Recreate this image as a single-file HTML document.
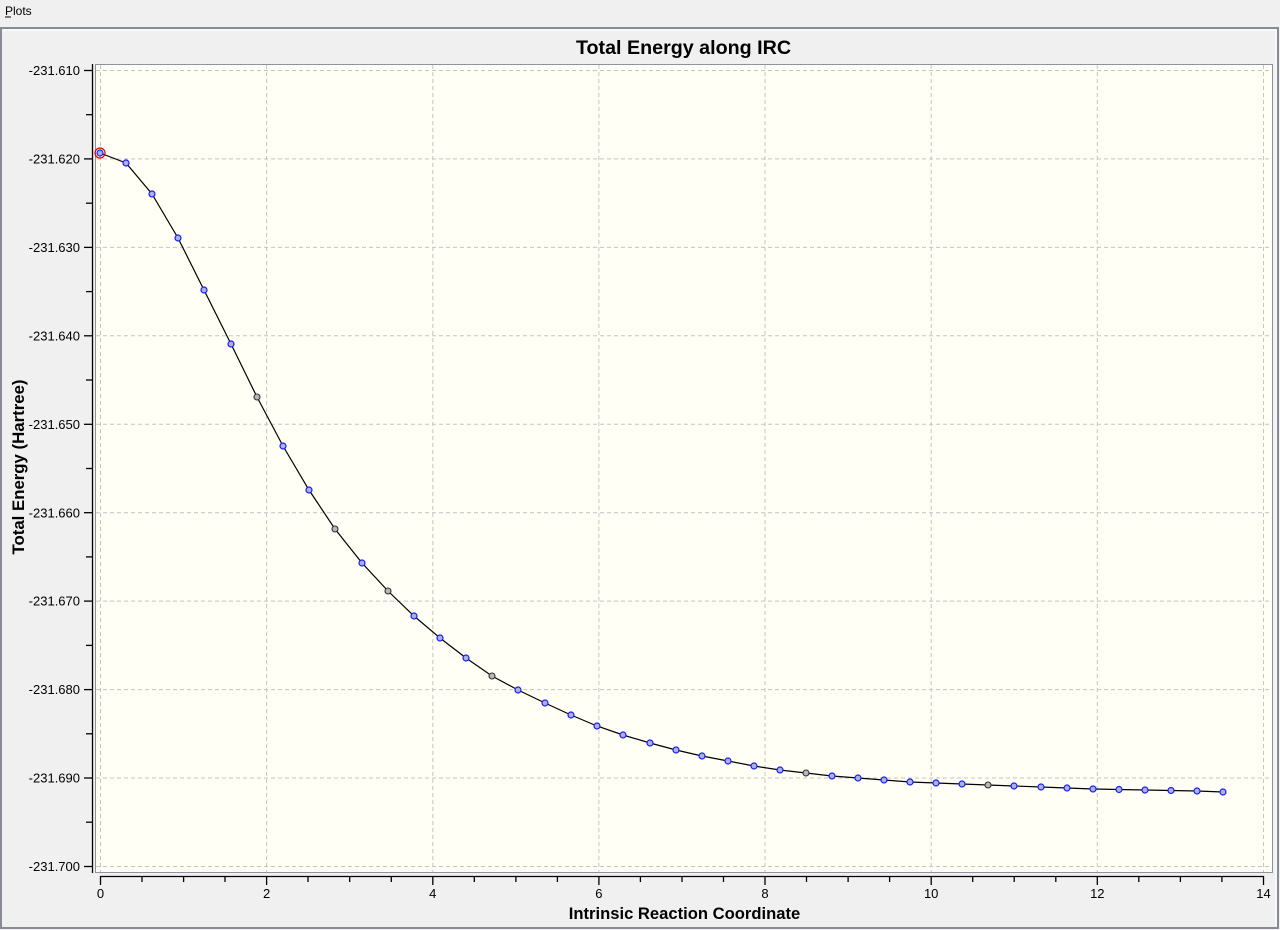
<!DOCTYPE html>
<html><head><meta charset="utf-8"><style>
html,body{margin:0;padding:0;width:1280px;height:930px;overflow:hidden;background:#f0f0f0;font-family:"Liberation Sans",Arial,sans-serif;}
</style></head><body>
<svg width="1280" height="930" viewBox="0 0 1280 930" xmlns="http://www.w3.org/2000/svg" font-family="Liberation Sans, Arial, sans-serif">
<rect x="0" y="0" width="1280" height="930" fill="#f0f0f0"/>
<text x="5" y="15" font-size="12" fill="#000">Plots</text>
<line x1="5" y1="17" x2="11" y2="17" stroke="#000" stroke-width="1"/>
<rect x="1" y="28" width="1277" height="900" fill="#f0f0f0" stroke="#878b96" stroke-width="2"/>
<line x1="3" y1="30" x2="1276" y2="30" stroke="#fff"/>
<line x1="1276" y1="30" x2="1276" y2="926" stroke="#fff"/>
<text x="683.5" y="54" font-size="19.7" font-weight="bold" text-anchor="middle" fill="#000">Total Energy along IRC</text>
<rect x="95.5" y="64.5" width="1177" height="808" fill="#fffff6" stroke="#8f939c" stroke-width="1"/>
<g stroke="#c4c4c4" stroke-width="1" stroke-dasharray="4,3" fill="none">
<line x1="96" y1="70.5" x2="1272" y2="70.5"/>
<line x1="96" y1="158.9" x2="1272" y2="158.9"/>
<line x1="96" y1="247.4" x2="1272" y2="247.4"/>
<line x1="96" y1="335.8" x2="1272" y2="335.8"/>
<line x1="96" y1="424.3" x2="1272" y2="424.3"/>
<line x1="96" y1="512.7" x2="1272" y2="512.7"/>
<line x1="96" y1="601.1" x2="1272" y2="601.1"/>
<line x1="96" y1="689.6" x2="1272" y2="689.6"/>
<line x1="96" y1="778" x2="1272" y2="778"/>
<line x1="96" y1="866.5" x2="1272" y2="866.5"/>
<line x1="100.5" y1="65" x2="100.5" y2="872"/>
<line x1="266.6" y1="65" x2="266.6" y2="872"/>
<line x1="432.8" y1="65" x2="432.8" y2="872"/>
<line x1="598.9" y1="65" x2="598.9" y2="872"/>
<line x1="765" y1="65" x2="765" y2="872"/>
<line x1="931.2" y1="65" x2="931.2" y2="872"/>
<line x1="1097.3" y1="65" x2="1097.3" y2="872"/>
<line x1="1263.5" y1="65" x2="1263.5" y2="872"/>
</g>
<g stroke="#000" stroke-width="1.3">
<line x1="92.5" y1="64" x2="92.5" y2="873"/>
<line x1="84" y1="70.5" x2="92" y2="70.5"/><line x1="86" y1="114.7" x2="92" y2="114.7"/>
<line x1="84" y1="158.9" x2="92" y2="158.9"/><line x1="86" y1="203.2" x2="92" y2="203.2"/>
<line x1="84" y1="247.4" x2="92" y2="247.4"/><line x1="86" y1="291.6" x2="92" y2="291.6"/>
<line x1="84" y1="335.8" x2="92" y2="335.8"/><line x1="86" y1="380" x2="92" y2="380"/>
<line x1="84" y1="424.3" x2="92" y2="424.3"/><line x1="86" y1="468.5" x2="92" y2="468.5"/>
<line x1="84" y1="512.7" x2="92" y2="512.7"/><line x1="86" y1="556.9" x2="92" y2="556.9"/>
<line x1="84" y1="601.1" x2="92" y2="601.1"/><line x1="86" y1="645.4" x2="92" y2="645.4"/>
<line x1="84" y1="689.6" x2="92" y2="689.6"/><line x1="86" y1="733.8" x2="92" y2="733.8"/>
<line x1="84" y1="778" x2="92" y2="778"/><line x1="86" y1="822.2" x2="92" y2="822.2"/>
<line x1="84" y1="866.5" x2="92" y2="866.5"/>
</g>
<g font-size="13" text-anchor="end" fill="#000">
<text x="80" y="75">-231.610</text>
<text x="80" y="163.5">-231.620</text>
<text x="80" y="252">-231.630</text>
<text x="80" y="340.5">-231.640</text>
<text x="80" y="429">-231.650</text>
<text x="80" y="517.5">-231.660</text>
<text x="80" y="605.5">-231.670</text>
<text x="80" y="694">-231.680</text>
<text x="80" y="782.5">-231.690</text>
<text x="80" y="871">-231.700</text>
</g>
<text transform="translate(24,467) rotate(-90)" font-size="16.8" font-weight="bold" text-anchor="middle" fill="#000">Total Energy (Hartree)</text>
<g stroke="#000" stroke-width="1.3">
<line x1="100" y1="876.5" x2="1264" y2="876.5"/>
<line x1="100.5" y1="876" x2="100.5" y2="885"/><line x1="142" y1="876" x2="142" y2="882"/><line x1="183.6" y1="876" x2="183.6" y2="882"/><line x1="225" y1="876" x2="225" y2="882"/>
<line x1="266.6" y1="876" x2="266.6" y2="885"/><line x1="308" y1="876" x2="308" y2="882"/><line x1="349.7" y1="876" x2="349.7" y2="882"/><line x1="391.3" y1="876" x2="391.3" y2="882"/>
<line x1="432.8" y1="876" x2="432.8" y2="885"/><line x1="474.3" y1="876" x2="474.3" y2="882"/><line x1="515.9" y1="876" x2="515.9" y2="882"/><line x1="557.4" y1="876" x2="557.4" y2="882"/>
<line x1="598.9" y1="876" x2="598.9" y2="885"/><line x1="640.4" y1="876" x2="640.4" y2="882"/><line x1="682" y1="876" x2="682" y2="882"/><line x1="723.5" y1="876" x2="723.5" y2="882"/>
<line x1="765" y1="876" x2="765" y2="885"/><line x1="806.5" y1="876" x2="806.5" y2="882"/><line x1="848.1" y1="876" x2="848.1" y2="882"/><line x1="889.6" y1="876" x2="889.6" y2="882"/>
<line x1="931.2" y1="876" x2="931.2" y2="885"/><line x1="972.7" y1="876" x2="972.7" y2="882"/><line x1="1014.2" y1="876" x2="1014.2" y2="882"/><line x1="1055.8" y1="876" x2="1055.8" y2="882"/>
<line x1="1097.3" y1="876" x2="1097.3" y2="885"/><line x1="1138.8" y1="876" x2="1138.8" y2="882"/><line x1="1180.4" y1="876" x2="1180.4" y2="882"/><line x1="1221.9" y1="876" x2="1221.9" y2="882"/>
<line x1="1263.5" y1="876" x2="1263.5" y2="885"/>
</g>
<g font-size="13" text-anchor="middle" fill="#000">
<text x="100.5" y="898">0</text>
<text x="266.6" y="898">2</text>
<text x="432.8" y="898">4</text>
<text x="598.9" y="898">6</text>
<text x="765" y="898">8</text>
<text x="931.2" y="898">10</text>
<text x="1097.3" y="898">12</text>
<text x="1263.5" y="898">14</text>
</g>
<text x="684.5" y="919" font-size="16.6" font-weight="bold" text-anchor="middle" fill="#000">Intrinsic Reaction Coordinate</text>
<polyline fill="none" stroke="#000" stroke-width="1.2" points="100,153 126,163 152,194 178,238 204,290 231,344 257,397 283,446 309,490 335,529 362,563 388,591 414,616 440,638 466,658 492,676 518,690 545,703 571,715 597,726 623,735 650,743 676,750 702,756 728,761 754,766 780,770 806,773 832,776 858,778 884,780 910,782 936,783 962,784 988,785 1014,786 1041,787 1067,788 1093,789 1119,789.5 1145,790 1171,790.5 1197,791 1223,792"/>
<g fill="#aab4d4" stroke="#1a1aff" stroke-width="1.2">
<circle cx="100" cy="153" r="3"/>
<circle cx="126" cy="163" r="3"/><circle cx="152" cy="194" r="3"/><circle cx="178" cy="238" r="3"/><circle cx="204" cy="290" r="3"/><circle cx="231" cy="344" r="3"/>
<circle cx="283" cy="446" r="3"/><circle cx="309" cy="490" r="3"/><circle cx="362" cy="563" r="3"/>
<circle cx="414" cy="616" r="3"/><circle cx="440" cy="638" r="3"/><circle cx="466" cy="658" r="3"/><circle cx="518" cy="690" r="3"/>
<circle cx="545" cy="703" r="3"/><circle cx="571" cy="715" r="3"/><circle cx="597" cy="726" r="3"/><circle cx="623" cy="735" r="3"/><circle cx="650" cy="743" r="3"/>
<circle cx="676" cy="750" r="3"/><circle cx="702" cy="756" r="3"/><circle cx="728" cy="761" r="3"/><circle cx="754" cy="766" r="3"/><circle cx="780" cy="770" r="3"/>
<circle cx="832" cy="776" r="3"/><circle cx="858" cy="778" r="3"/><circle cx="884" cy="780" r="3"/><circle cx="910" cy="782" r="3"/>
<circle cx="936" cy="783" r="3"/><circle cx="962" cy="784" r="3"/><circle cx="1014" cy="786" r="3"/><circle cx="1041" cy="787" r="3"/>
<circle cx="1067" cy="788" r="3"/><circle cx="1093" cy="789" r="3"/><circle cx="1119" cy="789.5" r="3"/><circle cx="1145" cy="790" r="3"/>
<circle cx="1171" cy="790.5" r="3"/><circle cx="1197" cy="791" r="3"/><circle cx="1223" cy="792" r="3"/>
</g>
<g fill="#b8b8b8" stroke="#333" stroke-width="1.1">
<circle cx="257" cy="397" r="3"/><circle cx="335" cy="529" r="3"/><circle cx="388" cy="591" r="3"/><circle cx="492" cy="676" r="3"/><circle cx="806" cy="773" r="3"/><circle cx="988" cy="785" r="3"/>
</g>
<circle cx="100" cy="153" r="5" fill="none" stroke="#e00000" stroke-width="1.2"/>
</svg>
</body></html>
